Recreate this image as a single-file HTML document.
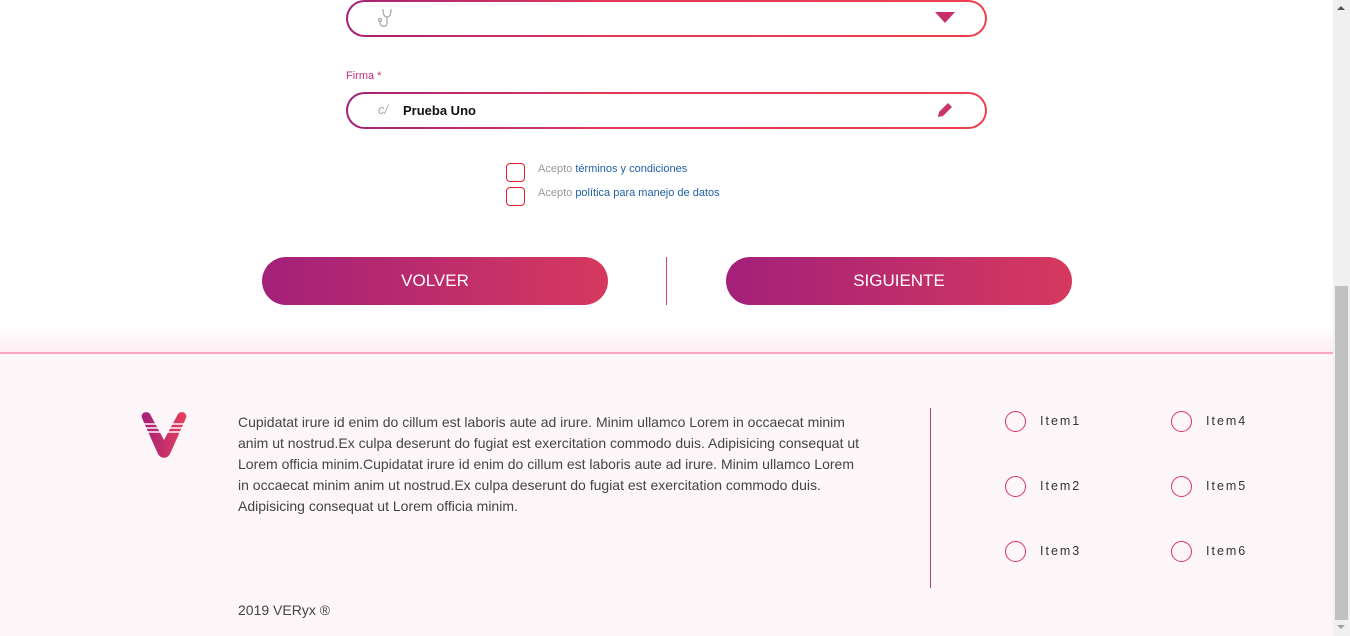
<!DOCTYPE html>
<html><head><meta charset="utf-8"><style>
*{box-sizing:border-box;margin:0;padding:0}
body{width:1350px;height:636px;overflow:hidden;background:#fff;font-family:"Liberation Sans",sans-serif;position:relative}
.field{position:absolute;left:346px;width:641px;height:37px;border-radius:19px;padding:2px;background:linear-gradient(90deg,#a32277,#e0385a 40%,#ef4150)}
.field .in{width:100%;height:100%;border-radius:17px;background:#fff;position:relative}
.btn{position:absolute;top:257px;width:346px;height:48px;border-radius:24px;background:linear-gradient(90deg,#a3207a,#d6395e);color:#fff;font-size:17px;text-align:center;line-height:48px}
.cb{position:absolute;left:506px;width:19px;height:19px;border:1.5px solid #e0202a;border-radius:4px;background:#fff}
.lbl{position:absolute;left:538px;font-size:11px;color:#999}
.lbl span{color:#1f5fa5}
footer{position:absolute;left:0;top:352px;width:1333px;height:284px;background:#fdf6f9;border-top:2px solid #f9a8c0}
.ft{position:absolute;left:238px;top:58px;width:625px;font-size:14px;line-height:21px;color:#444}
.item{position:absolute;font-size:12.5px;letter-spacing:2px;color:#333}
.circ{position:absolute;width:21px;height:21px;border-radius:50%;border:1.5px solid #d8336a}
</style></head><body>
<div style="position:absolute;left:0;top:325px;width:1333px;height:27px;background:linear-gradient(#fff,#fdeef3)"></div>
<div class="field" style="top:0"><div class="in">
<svg style="position:absolute;left:28px;top:5px" width="16" height="22" viewBox="0 0 16 22" fill="none" stroke="#aaa" stroke-width="1.3"><path d="M7 2c0 6 2 8 4 8s4-2 4-8M11 10v6c0 3-3 4-5 3s-2-3-2-5"/><circle cx="4" cy="13" r="1.5"/></svg>
<div style="position:absolute;right:30px;top:10px;width:0;height:0;border-left:10px solid transparent;border-right:10px solid transparent;border-top:11px solid #c7306b"></div>
</div></div>
<div style="position:absolute;left:346px;top:70px;font-size:11px;color:#c0307a">Firma *</div>
<div class="field" style="top:92px"><div class="in">
<span style="position:absolute;left:30px;top:8px;font-size:13px;color:#aaa;font-style:italic">c/</span>
<span style="position:absolute;left:55px;top:9px;font-size:13px;font-weight:bold;color:#111">Prueba Uno</span>
<svg style="position:absolute;right:30px;top:6px" width="20" height="20" viewBox="0 0 20 20"><path d="M3 17l1-5 9-9 4 4-9 9z M14 2l4 4" fill="#c8336a"/></svg>
</div></div>
<div class="cb" style="top:163px"></div><div class="lbl" style="top:163px">Acepto <span>términos y condiciones</span></div>
<div class="cb" style="top:187px"></div><div class="lbl" style="top:187px">Acepto <span>política para manejo de datos</span></div>
<div class="btn" style="left:262px">VOLVER</div>
<div style="position:absolute;left:666px;top:257px;width:1px;height:48px;background:#e04060"></div>
<div class="btn" style="left:726px">SIGUIENTE</div>
<footer>
<svg style="position:absolute;left:140px;top:56px" width="52" height="48" viewBox="0 0 52 48"><defs><linearGradient id="g" x1="0" x2="1"><stop offset="0" stop-color="#a3207a"/><stop offset="1" stop-color="#e8405a"/></linearGradient></defs><path d="M2 8c-2-5 5-8 8-4l14 26 14-26c3-4 10-1 8 4L30 44c-3 5-9 5-12 0z" fill="url(#g)"/><path d="M4 14h12M6 18h12M8 22h12M30 14h16M28 18h16M26 22h16" stroke="#fdf6f9" stroke-width="1.5"/></svg>
<div class="ft">Cupidatat irure id enim do cillum est laboris aute ad irure. Minim ullamco Lorem in occaecat minim anim ut nostrud.Ex culpa deserunt do fugiat est exercitation commodo duis. Adipisicing consequat ut Lorem officia minim.Cupidatat irure id enim do cillum est laboris aute ad irure. Minim ullamco Lorem in occaecat minim anim ut nostrud.Ex culpa deserunt do fugiat est exercitation commodo duis. Adipisicing consequat ut Lorem officia minim.</div>
<div style="position:absolute;left:238px;top:248px;font-size:14px;color:#444">2019 VERyx ®</div>
<div style="position:absolute;left:930px;top:54px;width:1px;height:180px;background:#b04070"></div>
<div class="circ" style="left:1005px;top:57px"></div><div class="item" style="left:1040px;top:60px">Item1</div>
<div class="circ" style="left:1005px;top:122px"></div><div class="item" style="left:1040px;top:125px">Item2</div>
<div class="circ" style="left:1005px;top:187px"></div><div class="item" style="left:1040px;top:190px">Item3</div>
<div class="circ" style="left:1171px;top:57px"></div><div class="item" style="left:1206px;top:60px">Item4</div>
<div class="circ" style="left:1171px;top:122px"></div><div class="item" style="left:1206px;top:125px">Item5</div>
<div class="circ" style="left:1171px;top:187px"></div><div class="item" style="left:1206px;top:190px">Item6</div>
</footer>
<div style="position:absolute;left:1333px;top:0;width:17px;height:636px;background:#f0f0f0"></div>
<div style="position:absolute;left:1337px;top:6px;border-left:4px solid transparent;border-right:4px solid transparent;border-bottom:4px solid #555"></div>
<div style="position:absolute;left:1335px;top:286px;width:13px;height:334px;background:#c1c1c1"></div>
<div style="position:absolute;left:1337px;top:625px;border-left:4px solid transparent;border-right:4px solid transparent;border-top:4px solid #a0a0a0"></div>
</body></html>
